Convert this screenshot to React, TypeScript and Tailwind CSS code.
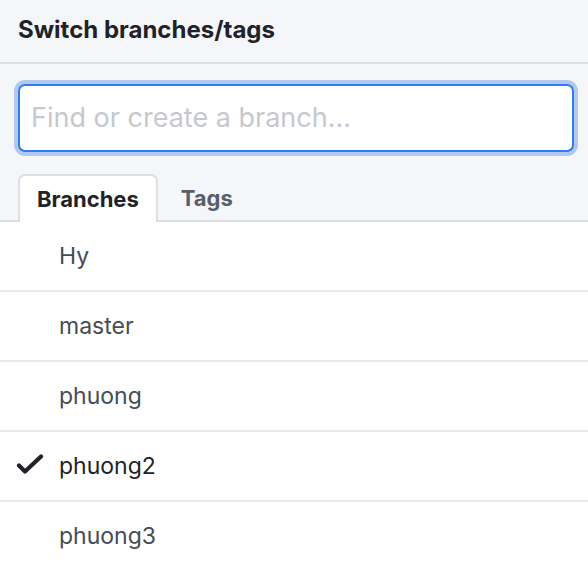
const branches = ['Hy', 'master', 'phuong', 'phuong2', 'phuong3'];
const current = 'phuong2';

function CheckIcon() {
  return (
    <svg viewBox="0 0 28 24" className="w-[28px] h-[24px]" fill="none">
      <polyline points="3,11.5 9,17.5 25,2.5" stroke="#1f2328" strokeWidth="4.2" strokeLinecap="round" strokeLinejoin="round" />
    </svg>
  );
}

export default function App() {
  return (
    <div className="w-[588px] h-[564px] overflow-hidden bg-white font-['Inter',sans-serif]">
      {/* header */}
      <div className="h-[64px] bg-[#f5f6fa] border-b-2 border-[#dcdee4] flex items-center px-[18px]">
        <span className="text-[24px] font-bold text-[#1f2328] -mt-[2px]">Switch branches/tags</span>
      </div>

      {/* filter + tabs */}
      <div className="bg-[#f5f6fa] pt-[20px]">
        <div className="ml-[18px] w-[556px] h-[68px] rounded-[7px] border-2 border-[#2f7bf5] bg-white shadow-[0_0_0_4px_#b3c8ee] flex items-center px-[11px]">
          <input
            className="w-full outline-none bg-transparent text-[27px] text-[#1f2328] placeholder:text-[#c6c8cd]"
            placeholder="Find or create a branch..."
          />
        </div>
        <div className="mt-[22px] flex items-end border-b-2 border-[#dcdee4]">
          <div className="ml-[18px] -mb-[2px] h-[48px] px-[17px] flex items-center bg-white border-2 border-b-0 border-[#dcdee4] rounded-t-[7px]">
            <span className="text-[22px] font-bold text-[#1f2328]">Branches</span>
          </div>
          <div className="ml-[23px] -mb-[2px] h-[48px] flex items-center">
            <span className="text-[22px] font-bold text-[#57606a]">Tags</span>
          </div>
        </div>
      </div>

      {/* branch list */}
      <div className="flex flex-col">
        {branches.map((b) => (
          <div key={b} className="h-[70px] border-b-2 border-[#eaeaef] flex items-center">
            <div className="w-[59px] flex items-center pl-[16px]">
              {b === current && <CheckIcon />}
            </div>
            <span className={`text-[23px] ${b === current ? 'text-[#1f2328]' : 'text-[#464c54]'}`}>{b}</span>
          </div>
        ))}
      </div>
    </div>
  );
}
